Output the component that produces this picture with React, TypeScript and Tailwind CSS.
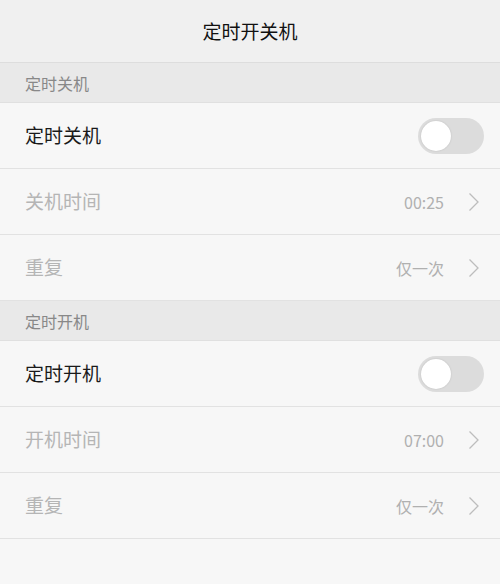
import React, { useState } from 'react'

const font = { fontFamily: '"Noto Sans CJK SC", "Noto Sans", Roboto, sans-serif' }

function Chevron() {
  return (
    <svg width="12" height="20" viewBox="0 0 12 20" className="ml-[24px]">
      <path d="M1.5 1.5 L10 10 L1.5 18.5" fill="none" stroke="#bdbdbd" strokeWidth="1.3" />
    </svg>
  )
}

function Toggle({ on, onChange }: { on: boolean; onChange: () => void }) {
  return (
    <button
      onClick={onChange}
      className={`relative w-[66px] h-[36px] rounded-full transition-colors ${on ? 'bg-[#3fb2f1]' : 'bg-[#dcdcdc]'}`}
    >
      <span
        className={`absolute top-[3px] w-[30px] h-[30px] rounded-full bg-white shadow-[0_0_2px_rgba(0,0,0,0.15)] transition-all ${on ? 'left-[33px]' : 'left-[3px]'}`}
      />
    </button>
  )
}

function Section({ label }: { label: string }) {
  return (
    <div className="h-[40px] bg-[#e9e9e9] border-b border-[#e0e0e0] flex items-center px-[25px] text-[16px] text-[#888888]">
      {label}
    </div>
  )
}

function SwitchRow({ title, on, onChange }: { title: string; on: boolean; onChange: () => void }) {
  return (
    <div className="h-[66px] bg-[#f7f7f7] border-b border-[#e2e2e2] flex items-center justify-between pl-[25px] pr-[16px]">
      <span className="text-[19px] text-[#1a1a1a]">{title}</span>
      <Toggle on={on} onChange={onChange} />
    </div>
  )
}

function ValueRow({ title, value, enabled }: { title: string; value: string; enabled: boolean }) {
  return (
    <div className="h-[66px] bg-[#f7f7f7] border-b border-[#e2e2e2] flex items-center justify-between pl-[25px] pr-[20px]">
      <span className={`text-[19px] ${enabled ? 'text-[#1a1a1a]' : 'text-[#b5b5b5]'}`}>{title}</span>
      <div className="flex items-center">
        <span className="text-[16px] text-[#b0b0b0]">{value}</span>
        <Chevron />
      </div>
    </div>
  )
}

export default function App() {
  const [offOn, setOffOn] = useState(false)
  const [bootOn, setBootOn] = useState(false)

  return (
    <div className="w-[500px] h-[584px] bg-[#f7f7f7] overflow-hidden" style={font}>
      <div className="h-[63px] bg-[#f0f0f0] border-b border-[#dddddd] flex items-center justify-center text-[19px] text-[#111111]">
        定时开关机
      </div>
      <Section label="定时关机" />
      <SwitchRow title="定时关机" on={offOn} onChange={() => setOffOn(!offOn)} />
      <ValueRow title="关机时间" value="00:25" enabled={offOn} />
      <ValueRow title="重复" value="仅一次" enabled={offOn} />
      <Section label="定时开机" />
      <SwitchRow title="定时开机" on={bootOn} onChange={() => setBootOn(!bootOn)} />
      <ValueRow title="开机时间" value="07:00" enabled={bootOn} />
      <ValueRow title="重复" value="仅一次" enabled={bootOn} />
    </div>
  )
}
